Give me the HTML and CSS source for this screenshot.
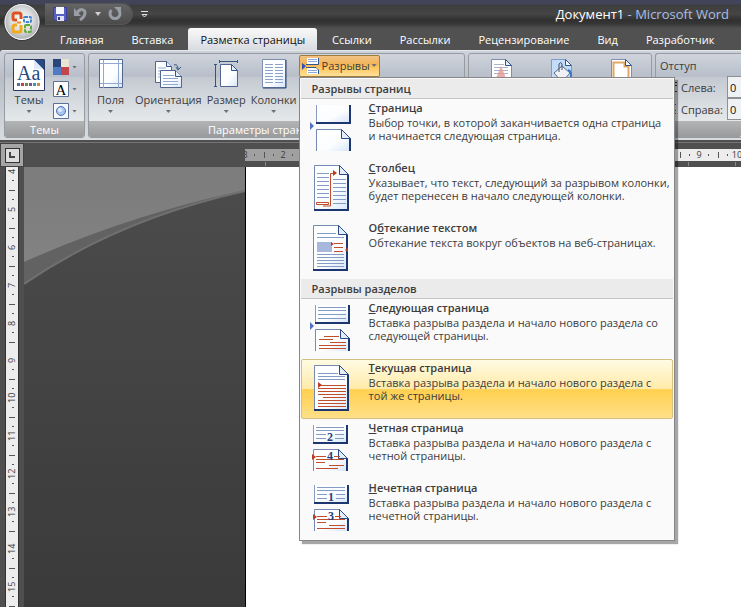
FILE: index.html
```html
<!DOCTYPE html>
<html lang="ru">
<head>
<meta charset="utf-8">
<title>Документ1 - Microsoft Word</title>
<link rel="stylesheet" href="styles.css">
</head>
<body>
<svg class="defs" aria-hidden="true">
  <defs>
    <linearGradient id="paper" x1="0" y1="0" x2="1" y2="1"><stop offset="0" stop-color="#fff"/><stop offset=".6" stop-color="#fbfdff"/><stop offset="1" stop-color="#d6e5fa"/></linearGradient>
    <radialGradient id="orb" cx=".5" cy=".45" r=".6"><stop offset="0" stop-color="#fff"/><stop offset=".5" stop-color="#dcdddf"/><stop offset=".8" stop-color="#b4b6b9"/><stop offset="1" stop-color="#f4f4f4"/></radialGradient>
    <g id="page">
      <path d="M1.500.500h25l9 9v36h-34z" fill="url(#paper)" stroke="#7689b2"/>
      <path d="M35 10v35H1" fill="none" stroke="#1c3770" stroke-width="2"/>
      <path d="M26.500.500v9h9z" fill="#e3edfb" stroke="#2a4a87"/>
    </g>
    <g id="top-half">
      <path d="M1 0h34v17H1z" fill="url(#paper)"/>
      <path d="M1.500 0v17" stroke="#8c9cbe"/>
      <path d="M35 0v18H1" fill="none" stroke="#1c3770" stroke-width="2"/>
    </g>
    <g id="bottom-half">
      <path d="M1.500 46V24.500h25l9 9V46z" fill="url(#paper)"/>
      <path d="M1.500 46V24.500h25l9 9" fill="none" stroke="#7689b2"/>
      <path d="M35 33v13" stroke="#1c3770" stroke-width="2"/>
      <path d="M26.500 24.500v9h9z" fill="#e3edfb" stroke="#2a4a87"/>
    </g>
  </defs>
</svg>
<div class="app">
  <header class="titlebar">
    <button class="office" aria-label="Office">
      <svg width="38" height="40" viewBox="0 0 38 40"><ellipse cx="19" cy="20" rx="18" ry="18.500" fill="url(#orb)" stroke="#333"/><ellipse cx="19" cy="20" rx="17" ry="17.500" fill="none" stroke="#fff" opacity=".8"/>
        <g fill="none"><path d="M14 18h-2q-2 0-2-2v-3q0-2 2-2h4q2 0 2 2v4" stroke="#dc5420" stroke-width="3"/><rect x="21" y="15" width="7" height="5" rx="1" stroke="#3f82d2" stroke-width="2" stroke-dasharray="3 1"/><path d="M14 23h-2q-2 0-2 2v3q0 2 2 2h4q2 0 2-2v-5" stroke="#f2a91c" stroke-width="3"/><rect x="22" y="23" width="6" height="7" rx="1" stroke="#62a93a" stroke-width="2" stroke-dasharray="4 1"/><path d="M14 20.500h4" stroke="#f08a1c" stroke-width="2"/></g>
      </svg>
    </button>
    <div class="quick">
      <button aria-label="Сохранить"><svg width="14" height="14"><path d="M.500.500h13v13h-11l-2-2z" fill="#5960c5" stroke="#3b4199"/><path d="M3 0h8v7H3z" fill="#f5f7ff"/><path d="M4 9h7v5H4z" fill="#dfe2f7"/><path d="M5 10h2v3H5z" fill="#31367f"/></svg></button>
      <button aria-label="Отменить"><svg width="14" height="14"><path d="M3 6C6 1 11 2 11 6c0 3-2 5-5 7" fill="none" stroke="#999da5" stroke-width="3"/><path d="M0 1v8h7z" fill="#999da5"/></svg></button>
      <button aria-label="Список отмены"><svg width="6" height="4"><path d="M0 0h6L3 4z" fill="#d0d0d0"/></svg></button>
      <button aria-label="Повторить"><svg width="14" height="14"><path d="M3.500 3a5 5 0 1 0 7 0" fill="none" stroke="#999da5" stroke-width="3"/><path d="M6 0h7v7z" fill="#999da5"/></svg></button>
    </div>
    <button class="customize" aria-label="Настройка панели"><svg width="7" height="7"><path d="M0 .500h7M1 3.500h5L3.500 6z" stroke="#e0e0e0" fill="none"/></svg></button>
    <h1>Документ1 <span>- Microsoft Word</span></h1>
  </header>
  <nav class="tabs">
    <button>Главная</button><button>Вставка</button><button class="active">Разметка страницы</button><button>Ссылки</button><button>Рассылки</button><button>Рецензирование</button><button>Вид</button><button>Разработчик</button>
  </nav>
  <section class="ribbon">
    <div class="group">
      <div class="tools themes">
        <button class="big"><svg width="32" height="32"><path d="M.500.500h31v31H.500z" fill="#fff" stroke="#2b3a63"/><path d="M21 1h10v10z" fill="#274a86"/><path d="M21 1v9h9z" fill="#dfe9f8"/><text x="4" y="21" class="glyph-aa">Aa</text><path d="M4 24h3v3H4z" fill="#5b6f96"/><path d="M8 24h3v3H8z" fill="#b9473e"/><path d="M12 24h3v3h-3z" fill="#6f8b43"/><path d="M16 24h3v3h-3z" fill="#70588f"/><path d="M20 24h3v3h-3z" fill="#3f94ac"/><path d="M24 24h3v3h-3z" fill="#d9863b"/></svg><span>Темы</span><i class="arrow"></i></button>
        <div class="stack">
          <button aria-label="Цвета"><svg width="16" height="16"><path d="M0 0h8v8H0z" fill="#2b4479"/><path d="M8 0h8v8H8z" fill="#e9e5d2"/><path d="M0 8h8v8H0z" fill="#4d7cc4"/><path d="M8 8h8v8H8z" fill="#c3474a"/></svg><i class="arrow"></i></button>
          <button aria-label="Шрифты"><svg width="16" height="16"><path d="M.500.500h15v15H.500z" fill="#fff" stroke="#5d7194"/><text x="8" y="14" class="glyph-a">A</text></svg><i class="arrow"></i></button>
          <button aria-label="Эффекты"><svg width="16" height="16"><path d="M.500.500h15v15H.500z" fill="#f5f9ff" stroke="#5d7194"/><circle cx="8" cy="8" r="4.500" fill="#a9c5f0" stroke="#5275b5"/><circle cx="7" cy="7" r="2" fill="#e3edfc"/></svg><i class="arrow"></i></button>
        </div>
      </div>
      <h2>Темы</h2>
    </div>
    <div class="group setup">
      <div class="tools">
        <button class="big margins"><svg width="24" height="30"><path d="M.500.500h23v28H.500z" fill="url(#paper)" stroke="#52668f"/><path d="M4.500 1v28M19.500 1v28M1 4.500h22M1 24.500h22" stroke="#91a8d0"/></svg><span>Поля</span><i class="arrow"></i></button>
        <button class="big"><svg width="28" height="30"><path d="M1.500 2.500h11l5 5v16h-16z" fill="url(#paper)" stroke="#52668f"/><path d="M4 9h8M4 12h8M4 15h8M4 18h8" stroke="#91a8d0"/><path d="M6.500 11.500h15l6 6v11h-21z" fill="url(#paper)" stroke="#52668f"/><path d="M21.500 11.500v6h6M12.500 2.500v5h5" fill="#e3edfb" stroke="#355388"/><path d="M9 16.500h11M9 19.500h15M9 22.500h15M9 25.500h15" stroke="#91a8d0"/><path d="M20 6c3-1 4 1 4 4m-2-2l2 3 3-3" fill="none" stroke="#37547f"/></svg><span>Ориентация</span><i class="arrow"></i></button>
        <button class="big"><svg width="26" height="30"><path d="M7.500 5.500h11l6 6v16h-17z" fill="url(#paper)" stroke="#52668f"/><path d="M18.500 5.500v6h6z" fill="#e3edfb" stroke="#355388"/><path d="M7 2.500h18M6.500 1v3M24.500 1v3M2.500 6v21M1 5.500h3M1 27.500h3" stroke="#37547f"/></svg><span>Размер</span><i class="arrow"></i></button>
        <button class="big"><svg width="26" height="30"><path d="M1.500.500h23v28h-23z" fill="url(#paper)" stroke="#7d8fb0"/><path d="M25 1v28H2" fill="none" stroke="#263f73"/><path d="M4 5.500h8M4 8.500h8M4 11.500h8M4 14.500h8M4 17.500h8M4 20.500h8M4 23.500h8M14 5.500h8M14 8.500h8M14 11.500h8M14 14.500h8M14 17.500h8M14 20.500h8M14 23.500h8" stroke="#8ba3cc"/></svg><span>Колонки</span><i class="arrow"></i></button>
        <div class="dropdown">
          <button class="breaks" aria-expanded="true"><svg width="18" height="16"><path d="M0 5l4 3-4 4z" fill="#344fb5"/><path d="M5 0h11v6H5zM5 10h11v6H5z" fill="#fff"/><path d="M6 1.500h9M6 3.500h9M6 12.500h9M6 14.500h9" stroke="#8ba8da"/><path d="M16.500 0v6.500H4M4 9.500h10l2.500 2.500v4" fill="none" stroke="#33558e"/></svg><span>Разрывы</span><i class="arrow"></i></button>
          <div class="menu" role="menu">
            <h3>Разрывы страниц</h3>
            <button role="menuitem"><svg width="40" height="48"><use href="#top-half" x="4"/><use href="#bottom-half" x="4"/><path d="M-1 17l4 4-4 4z" fill="#5273c2"/></svg><span><b><u>С</u>траница</b>Выбор точки, в которой заканчивается одна страница<br>и начинается следующая страница.</span></button>
            <button role="menuitem"><svg width="40" height="48"><use href="#page" x="2"/><path d="M6 8.500h12M6 12.500h12M6 16.500h12M6 20.500h12M6 24.500h12M6 28.500h12M6 32.500h12M22 14.500h13M22 18.500h13M22 22.500h13M22 26.500h13M22 30.500h13M22 34.500h13M22 38.500h13" stroke="#849bc6"/><path d="M5.500 37.500h12v2h-12zM12 41h7.500V8.500h4" fill="none" stroke="#c14e2b"/><path d="M22 5l4 3-4 3z" fill="#bd3a25"/></svg><span><b><u>С</u>толбец</b>Указывает, что текст, следующий за разрывом колонки,<br>будет перенесен в начало следующей колонки.</span></button>
            <button role="menuitem"><svg width="40" height="48"><use href="#page" x="1"/><path d="M6 8.500h19M6 12.500h27M6 29.500h27M6 32.500h27M6 35.500h27M6 38.500h27M6 41.500h27" stroke="#849bc6"/><path d="M6 17h15v10H6z" fill="#a7b8dc"/><path d="M23 18.500h9M23 22.500h9M23 26.500h9" stroke="#c14e2b"/><path d="M20 17l3 2-3 2zM37 22l-3 3 3 2z" fill="#bd3a25"/></svg><span><b>О<u>б</u>текание текстом</b>Обтекание текста вокруг объектов на веб-страницах.</span></button>
            <h3>Разрывы разделов</h3>
            <button role="menuitem"><svg width="40" height="48"><use href="#top-half" x="3"/><use href="#bottom-half" x="3"/><path d="M7 2.500h28M7 5.500h28M7 9.500h28M7 13.500h28" stroke="#849bc6"/><path d="M13 31.500h15M8 34.500h14M19 37.500h16M8 40.500h27M8 43.500h27" stroke="#c14e2b"/><path d="M-1 17l4 4-4 4z" fill="#5273c2"/></svg><span><b><u>С</u>ледующая страница</b>Вставка разрыва раздела и начало нового раздела со<br>следующей страницы.</span></button>
            <button role="menuitem" class="hot"><svg width="40" height="48"><use href="#page" x="2"/><path d="M7 8.500h20M7 11.500h27M7 14.500h27" stroke="#849bc6"/><path d="M10 20.500h25M7 23.500h28M7 26.500h28M7 29.500h28M12 32.500h23M7 35.500h28M7 38.500h28M7 41.500h28" stroke="#c14e2b"/><path d="M7 17l4 3-4 3z" fill="#bd3a25"/></svg><span><b><u>Т</u>екущая страница</b>Вставка разрыва раздела и начало нового раздела с<br>той же страницы.</span></button>
            <button role="menuitem"><svg width="40" height="48"><use href="#top-half" x="1"/><use href="#bottom-half" x="1"/><path d="M5 2.500h28M5 5.500h28M5 9.500h10M24 9.500h9M5 13.500h10M24 13.500h9" stroke="#849bc6"/><path d="M5 31.500h10M23 31.500h6M5 34.500h28M5 37.500h9M18 40.500h15M5 43.500h22" stroke="#c14e2b"/><path d="M1 29l4 3-4 3z" fill="#bd3a25"/><text x="19" y="16" class="num">2</text><text x="19" y="35" class="num">4</text></svg><span><b><u>Ч</u>етная страница</b>Вставка разрыва раздела и начало нового раздела с<br>четной страницы.</span></button>
            <button role="menuitem"><svg width="40" height="48"><use href="#top-half" x="2"/><use href="#bottom-half" x="2"/><path d="M6 2.500h28M6 5.500h28M6 9.500h10M25 9.500h9M6 13.500h10M25 13.500h9" stroke="#849bc6"/><path d="M6 31.500h10M24 31.500h6M6 34.500h28M6 37.500h9M18 40.500h16M6 43.500h28" stroke="#c14e2b"/><path d="M2 29l4 3-4 3z" fill="#bd3a25"/><text x="20" y="16" class="num">1</text><text x="20" y="35" class="num">3</text></svg><span><b><u>Н</u>ечетная страница</b>Вставка разрыва раздела и начало нового раздела с<br>нечетной страницы.</span></button>
          </div>
        </div>
      </div>
      <h2>Параметры страницы</h2>
    </div>
    <div class="group background">
      <div class="tools">
        <button class="big" aria-label="Подложка"><svg width="24" height="30"><path d="M1.500.500h14l6 6v23h-20z" fill="#fff" stroke="#7d8fb0"/><path d="M15.500.500v6h6z" fill="#e3edfb" stroke="#355388"/><path d="M4 5.500h10M4 8.500h14M4 11.500h14M4 14.500h14" stroke="#a9b4c6"/><path d="M11 7l7 17h-3l-1-4H8l-1 4H4z" fill="#e39a92" opacity=".8"/></svg></button>
        <button class="big" aria-label="Цвет страницы"><svg width="24" height="30"><path d="M1.500.500h14l6 6v23h-20z" fill="#c3dcfa" stroke="#7d9bcb"/><path d="M15.500.500v6h6z" fill="#f4f8fe" stroke="#355388"/><path d="M4 14l8-7 8 7-8 9z" fill="#eff1f4" stroke="#5c6b82"/><path d="M9 13V5q2-3 3 0v6" fill="none" stroke="#44536b"/><path d="M18 11q5 2 2 9" fill="none" stroke="#3c79c9" stroke-width="2"/></svg></button>
        <button class="big" aria-label="Границы страниц"><svg width="24" height="30"><path d="M1.500.500h14l6 6v23h-20z" fill="#fff" stroke="#7d8fb0"/><path d="M3.500 29V3.500h11v4h4V29" fill="none" stroke="#dfa766" stroke-width="2"/><path d="M15.500.500v6h6z" fill="#f4f8fe" stroke="#355388"/></svg></button>
      </div>
      <h2></h2>
    </div>
    <div class="group indent">
      <div class="tools">
        <p>Отступ</p>
        <div class="field"><svg width="18" height="12"><path d="M0 1.500h17M8 4.500h9M8 7.500h6M0 10.500h17" stroke="#333"/></svg><label for="left">Слева:</label><input id="left" value="0"></div>
        <div class="field"><svg width="18" height="12"><path d="M0 1.500h16M0 4.500h14M0 7.500h16M0 10.500h16" stroke="#555"/></svg><label for="right">Справа:</label><input id="right" value="0"></div>
      </div>
      <h2></h2>
    </div>
  </section>
  <main class="workspace">
    <div class="corner"><button aria-label="Табуляция"><svg width="8" height="8"><path d="M2 1v5h5" fill="none" stroke="#444" stroke-width="2"/></svg></button></div>
    <div class="hruler">
      <ol><li class="off">3</li><li class="off">2</li><li class="off">1</li><li></li><li>1</li><li>2</li><li>3</li><li>4</li><li>5</li><li>6</li><li>7</li><li>8</li><li>9</li><li>10</li></ol>
      <div class="stops"></div>
    </div>
    <div class="vruler"><ol><li><span>4</span></li><li><span>5</span></li><li><span>6</span></li><li><span>7</span></li><li><span>8</span></li><li><span>9</span></li><li><span>10</span></li><li><span>11</span></li><li><span>12</span></li><li><span>13</span></li><li><span>14</span></li><li><span>15</span></li></ol></div>
    <div class="desk"><svg width="221" height="118"><defs><linearGradient id="gloss" x1="0" y1="0" x2="0" y2="1"><stop offset="0" stop-color="#7c7c7c"/><stop offset="1" stop-color="#828282"/></linearGradient></defs><path d="M0 0h221v24Q95 52 0 117z" fill="#626262"/><path d="M0 117Q95 52 221 24" fill="none" stroke="#707070" stroke-width="2"/><path d="M0 0h221v23Q105 48 0 95z" fill="url(#gloss)"/></svg></div>
    <article class="sheet"></article>
  </main>
</div>
</body>
</html>
```
FILE: styles.css
```css
* { box-sizing: border-box; }
body { margin: 0; font: 11px/13px "Open Sans", "Noto Sans", sans-serif; color: #3c3c3c; }
button { margin: 0; padding: 0; border: 0; background: none; font: inherit; color: inherit; }
h1, h2, h3, p, ol { margin: 0; padding: 0; font-size: 11px; font-weight: 400; list-style: none; }
svg { display: block; flex: none; overflow: visible; }
.defs { position: absolute; width: 0; height: 0; }
.app { display: flex; flex-direction: column; height: 100vh; overflow: hidden; background: #4f4f4f; }

.titlebar { position: relative; display: flex; align-items: center; height: 28px; padding: 0 12px 0 45px; background: linear-gradient(#42445a 0 4px, #3d3d3d 5px, #454545 14px, #303030 20px, #373737 24px, #4f4f4f); }
.office { position: absolute; left: 3px; top: 2px; z-index: 2; }
.quick { display: flex; align-items: center; gap: 7px; height: 22px; padding: 0 10px 0 8px; border: 1px solid #555; border-left: 0; border-radius: 0 12px 12px 0; background: linear-gradient(#646464, #4b4b4b); }
.customize { margin-left: 8px; }
.titlebar h1 { margin-left: auto; font-size: 13px; line-height: 18px; color: #fff; }
.titlebar h1 span { color: #a9bfe6; }

.tabs { display: flex; height: 22px; padding-left: 47px; background: #515151; }
.tabs button { padding: 0 13px; color: #fff; white-space: nowrap; }
.tabs button + button { margin-left: 2px; }
.tabs .active { padding: 0 12px; border-radius: 3px 3px 0 0; background: linear-gradient(#fafafa, #d8dbe1); color: #111; }

.ribbon { display: grid; grid-template-columns: 81px 377px 184px 1fr; gap: 3px; height: 90px; padding: 2px 0 2px 4px; border-top: 1px solid #e4e7ec; border-radius: 3px 0 0 0; background: linear-gradient(#cdd2da, #b9bec7 30%, #d9dcdf); }
.group { display: flex; flex-direction: column; min-width: 0; border: 1px solid #969ba2; border-radius: 3px; background: linear-gradient(#cfd4dc, #b8bfca 22px, #c5cad2 24px, #e4e8ea 66px); }
.group h2 { display: flex; align-items: center; justify-content: center; height: 16px; margin-top: auto; border-radius: 0 0 2px 2px; background: linear-gradient(#b2b4b6, #989a9c); color: #fff; }
.setup h2 { padding-right: 20px; }
.tools { display: flex; align-items: flex-start; padding: 5px 0 0 8px; }
.setup .tools { gap: 5px; }
.big { display: flex; flex-direction: column; align-items: center; }
.big svg { height: 32px; }
.big span { margin-top: 2px; }
.margins { margin-right: 6px; }
.arrow { width: 5px; height: 3px; margin-top: 4px; background: #6d7075; clip-path: polygon(0 0, 100% 0, 50% 100%); }
.stack { display: flex; flex-direction: column; gap: 6px; margin-left: 8px; }
.stack button { display: flex; align-items: center; gap: 3px; }
.stack .arrow { margin: 0; }
.background .tools { justify-content: space-between; padding: 5px 17px 0 21px; }

.dropdown { position: relative; margin: -4px 0 0 -3px; }
.breaks { display: flex; align-items: center; gap: 2px; height: 22px; padding: 0 2px 1px; border: 1px solid #a07c3e; border-radius: 2px; background: linear-gradient(#f2c387, #f3b457 40%, #fdc860 60%, #ffe19a); }
.breaks .arrow { margin: 0; }
.menu { position: absolute; left: 0; top: 22px; z-index: 3; width: 376px; padding: 1px; border: 1px solid #868686; background: #fafafa; box-shadow: 3px 3px 1px rgba(0, 0, 0, .35); }
.menu h3 { height: 20px; padding: 3px 11px; border-bottom: 1px solid #c5c5c5; background: #ebebeb; font-weight: 600; }
.menu button { display: flex; gap: 18px; width: 100%; height: 60px; padding: 5px 7px 5px 9px; border: 1px solid transparent; border-radius: 2px; text-align: left; white-space: nowrap; }
.menu button span { margin-top: -4px; }
.menu b { display: block; margin-bottom: 2px; font-weight: 600; }
.menu .hot { border-color: #d5be7f; background: linear-gradient(#fffbe3, #ffeaa8 50%, #ffd04f 51%, #ffdf88); }
.num { font: 700 12px "Liberation Serif", serif; fill: #223f80; text-anchor: middle; }
.glyph-aa { font: 20px "Liberation Serif", serif; fill: #274a86; }
.glyph-a { font: 15px "Liberation Serif", serif; fill: #000; text-anchor: middle; }

.indent { border-right: 0; border-radius: 3px 0 0 3px; overflow: hidden; }
.indent .tools { display: block; padding: 5px 0 0 4px; }
.indent p { margin-bottom: 4px; }
.field { display: flex; align-items: center; height: 22px; }
.field label { flex: none; width: 46px; margin-left: 3px; }
.field input { flex: none; width: 60px; height: 22px; padding: 0 2px; border: 1px solid #8d9196; background: #f0f1f2; font: inherit; color: #111; }

.workspace { display: grid; grid-template-columns: 24px 221px 1fr; grid-template-rows: 24px 1fr; flex: 1; min-height: 0; margin-top: 2px; border-top: 1px solid #747474; }
.corner { display: flex; align-items: center; justify-content: center; border: 1px solid #444; background: #a5a5a5; }
.corner button { display: grid; place-items: center; width: 15px; height: 15px; border: 1px solid #333; background: #ddd; }
.hruler { grid-column: 2 / 4; margin-left: 221px; padding-top: 6px; overflow: hidden; }
.hruler ol { display: flex; height: 12px; margin-left: -19px; background: #ededed; }
.hruler li { flex: 0 0 38px; font-size: 9px; line-height: 12px; text-align: center; background: linear-gradient(#555, #555) 9px 5px / 1px 2px no-repeat, linear-gradient(#555, #555) 0 3px / 1px 6px no-repeat, linear-gradient(#555, #555) 28px 5px / 1px 2px no-repeat; }
.hruler li:nth-child(5n) { flex-basis: 37px; }
.hruler .off { background-color: #a0a0a0; }
.stops { height: 4px; margin-top: 1px; background: repeating-linear-gradient(90deg, #888 0 1px, transparent 1px 47px) 20px 0 / 47px 4px repeat-x; }
.vruler { overflow: hidden; padding-left: 5px; }
.vruler ol { width: 14px; margin-top: -5px; border: solid #333; border-width: 0 1px; background: #ededed; }
.vruler li { height: 38px; background: linear-gradient(#555, #555) 6px 18px / 2px 1px no-repeat, linear-gradient(#555, #555) 3px 28px / 6px 1px no-repeat, linear-gradient(#555, #555) 6px 37px / 2px 1px no-repeat; }
.vruler li:nth-child(5n) { height: 37px; }
.vruler span { display: block; width: 12px; height: 18px; font-size: 9px; line-height: 12px; text-align: center; writing-mode: vertical-rl; transform: rotate(180deg); }
.desk { overflow: hidden; background: linear-gradient(#4c4c4c, #3a3a3a); }
.sheet { border-left: 1px solid #000; background: #fff; }
```
